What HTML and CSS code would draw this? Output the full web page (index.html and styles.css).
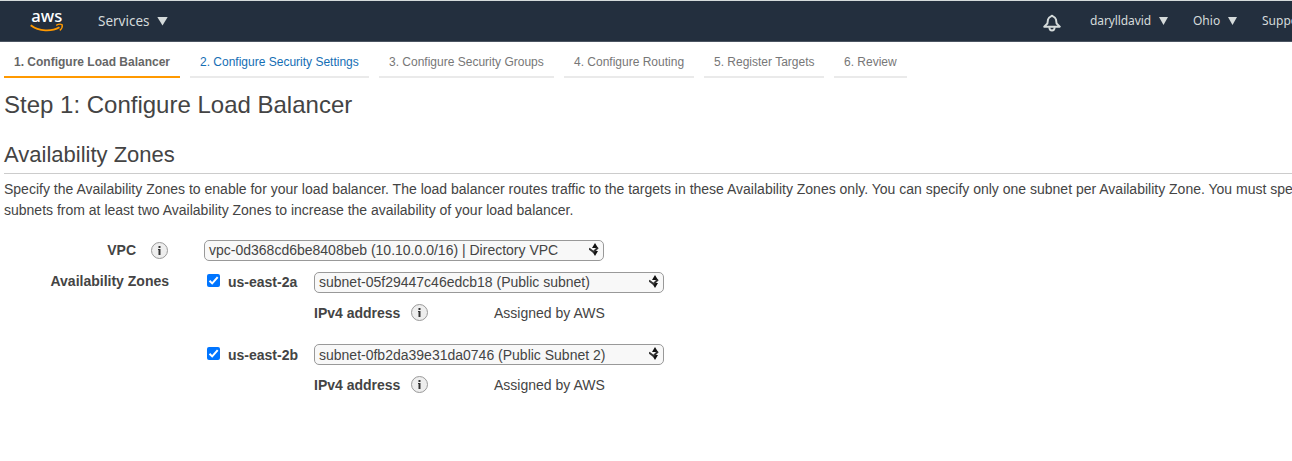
FILE: index.html
```html
<!DOCTYPE html>
<html lang="en">
<head>
<meta charset="utf-8">
<title>Configure Load Balancer</title>
<link rel="stylesheet" href="styles.css">
</head>
<body>
<header class="nav">
  <svg class="logo" viewBox="0 0 34 22" width="34" height="22">
    <text class="logo-text" x="1.3" y="11" textLength="31" lengthAdjust="spacingAndGlyphs">aws</text>
    <path d="M.7 14.2C9 20.700 22 20.700 29.500 16.200" fill="none" stroke="#f90" stroke-width="1.900"/>
    <path d="M26.200 14.300C28.500 13 31 13 32.200 13.800C32.600 15.800 31.500 18 29.800 19.400" fill="none" stroke="#f90" stroke-width="1.400"/>
  </svg>
  <span class="services">Services</span><i class="caret caret-lg"></i>
  <div class="nav-right">
    <svg class="bell" viewBox="0 0 18 18" width="18" height="18" fill="none" stroke="#d5dbdb" stroke-width="1.900" stroke-linejoin="round"><path d="M1.200 12.700L4.400 9.500L5 5.500Q5.700 3.200 8 2.400Q9 .8 10 2.400Q12.300 3.200 13 5.500L13.600 9.500L16.800 12.700Z"/><path d="M6.300 13.200Q6.500 16.500 9 16.500T11.700 13.200"/></svg>
    <span class="user">darylldavid</span><i class="caret"></i>
    <span class="region">Ohio</span><i class="caret"></i>
    <span class="support">Support</span>
  </div>
</header>
<nav class="tabs">
  <a class="tab tab-active">1. Configure Load Balancer</a>
  <a class="tab tab-link tab-settings">2. Configure Security Settings</a>
  <a class="tab tab-groups">3. Configure Security Groups</a>
  <a class="tab tab-routing">4. Configure Routing</a>
  <a class="tab tab-targets">5. Register Targets</a>
  <a class="tab tab-review">6. Review</a>
</nav>
<main>
  <h1>Step 1: Configure Load Balancer</h1>
  <h2>Availability Zones</h2>
  <p class="intro">Specify the Availability Zones to enable for your load balancer. The load balancer routes traffic to the targets in these Availability Zones only. You can specify only one subnet per Availability Zone. You must specify<br>subnets from at least two Availability Zones to increase the availability of your load balancer.</p>
  <div class="row vpc-row">
    <div class="label">VPC <span class="info"><svg viewBox="0 0 18 18" width="18" height="18"><circle cx="8.500" cy="9.500" r="8" fill="#eee" stroke="#999"/><path d="M7.500 5h2v2h-2zM7 8h2.500v6h-2V9H7z" fill="#333"/></svg></span></div>
    <div class="select select-vpc"><span>vpc-0d368cd6be8408beb (10.10.0.0/16) | Directory VPC</span><svg class="sort" viewBox="0 0 10 13" width="10" height="13"><path d="M6 0L9 5H3ZM3 8H9L6 13Z" fill="#111"/><path d="M0 5.500L4.500 9L9 4.500" fill="none" stroke="#333" stroke-width="2"/></svg></div>
  </div>
  <div class="row zone-row">
    <div class="label label-zones">Availability Zones</div>
    <div class="zones">
      <section class="zone">
        <svg class="check" viewBox="0 0 13 13" width="13" height="13"><rect width="13" height="13" rx="2" fill="#0075ff"/><path d="M2.500 6.700L5.200 9.400L10.700 3.200" fill="none" stroke="#fff" stroke-width="2"/></svg>
        <b class="zone-name">us-east-2a</b>
        <div class="zone-body">
          <div class="select"><span>subnet-05f29447c46edcb18 (Public subnet)</span><svg class="sort" viewBox="0 0 10 13" width="10" height="13"><path d="M6 0L9 5H3ZM3 8H9L6 13Z" fill="#111"/><path d="M0 5.500L4.500 9L9 4.500" fill="none" stroke="#333" stroke-width="2"/></svg></div>
          <div class="address"><b>IPv4 address</b><span class="info"><svg viewBox="0 0 18 18" width="18" height="18"><circle cx="8.500" cy="8.500" r="8" fill="#eee" stroke="#999"/><path d="M7.500 4h2v2h-2zM7 7h2.500v6h-2V8H7z" fill="#333"/></svg></span><span class="assigned">Assigned by AWS</span></div>
        </div>
      </section>
      <section class="zone">
        <svg class="check check-low" viewBox="0 0 13 13" width="13" height="13"><rect width="13" height="13" rx="2" fill="#0075ff"/><path d="M2.500 6.700L5.200 9.400L10.700 3.200" fill="none" stroke="#fff" stroke-width="2"/></svg>
        <b class="zone-name zone-name-low">us-east-2b</b>
        <div class="zone-body">
          <div class="select select-low"><span>subnet-0fb2da39e31da0746 (Public Subnet 2)</span><svg class="sort" viewBox="0 0 10 13" width="10" height="13"><path d="M6 0L9 5H3ZM3 8H9L6 13Z" fill="#111"/><path d="M0 5.500L4.500 9L9 4.500" fill="none" stroke="#333" stroke-width="2"/></svg></div>
          <div class="address"><b>IPv4 address</b><span class="info"><svg viewBox="0 0 18 18" width="18" height="18"><circle cx="8.500" cy="8.500" r="8" fill="#eee" stroke="#999"/><path d="M7.500 4h2v2h-2zM7 7h2.500v6h-2V8H7z" fill="#333"/></svg></span><span class="assigned">Assigned by AWS</span></div>
        </div>
      </section>
    </div>
  </div>
</main>
</body>
</html>
```
FILE: styles.css
```css
* { box-sizing: border-box; }
html, body { margin: 0; overflow: hidden; background: #fff; }
body { height: 461px; font: 14px/20px "Liberation Sans", Arial, sans-serif; color: #444; }

.nav { display: flex; align-items: center; height: 42px; padding-left: 30px; background: #232f3e; border-top: 1px solid #d5dbdb; border-bottom: 1px solid #4b5562; color: #d5dbdb; font-family: "Noto Sans", "Open Sans", sans-serif; white-space: nowrap; }
.logo { margin-top: 1px; overflow: visible; }
.logo-text { font: 500 16px "Noto Sans", sans-serif; fill: #fff; }
.services { width: 52px; margin-left: 34px; font-size: 13.500px; }
.caret { flex: none; width: 9px; height: 8px; margin-left: 8px; background: #d5dbdb; clip-path: polygon(0 0, 100% 0, 50% 100%); }
.caret-lg { width: 11px; height: 9px; margin-left: 7px; }
.nav-right { display: flex; align-items: center; width: 249px; margin-left: auto; font-size: 12px; }
.bell { flex: none; margin-top: 3px; }
.user { flex: none; width: 61px; margin-left: 29px; letter-spacing: -.1px; }
.region { flex: none; width: 27px; margin-left: 25px; }
.support { margin-left: 25px; }

.tabs { display: flex; gap: 10px; height: 36px; padding-left: 4px; }
.tab { width: 176px; height: 36px; padding: 10px 10px 0; border-bottom: 2px solid #eaeaea; font-size: 12px; color: #777; white-space: nowrap; }
.tab-active { border-color: #f90; color: #666; font-weight: bold; }
.tab-link { color: #146eb4; }
.tab-settings { width: 179px; }
.tab-groups { width: 175px; }
.tab-routing { width: 130px; }
.tab-targets { width: 120px; }
.tab-review { width: 73px; }

main { padding-left: 4px; }
h1 { margin: 12px 0 0; font: 24px/30px "Liberation Sans", Arial, sans-serif; }
h2 { height: 54px; margin: 0; padding-top: 20px; border-bottom: 1px solid #ccc; font: 22px/30px "Liberation Sans", Arial, sans-serif; }
.intro { margin: 5px 0 0; line-height: 21px; white-space: nowrap; }
.row { display: flex; }
.vpc-row { margin-top: 19px; height: 32px; }
.label { width: 200px; padding-right: 35px; font-weight: bold; text-align: right; }
.label-zones { line-height: 18px; }
.vpc-row .label { display: flex; justify-content: flex-end; }
.info { display: inline-flex; align-items: center; height: 20px; }
.label .info { margin-left: 15px; }
.select { display: flex; align-items: center; justify-content: space-between; width: 350px; height: 21px; padding: 0 4px 0 4px; border: 1px solid #999; border-radius: 5px; background: #f8f8f8; line-height: 17px; }
.select-low span { padding-top: 2px; }
.select-vpc { width: 400px; }
.sort { margin-top: -2px; }
.zone { display: flex; height: 72px; }
.check { margin: 2px 8px 0 3px; }
.check-low { margin-top: 3px; }
.zone-name { width: 86px; }
.zone-name-low { padding-top: 1px; }
.address { display: flex; margin-top: 10px; }
.address b { width: 97px; }
.assigned { margin-left: 65px; }
```
